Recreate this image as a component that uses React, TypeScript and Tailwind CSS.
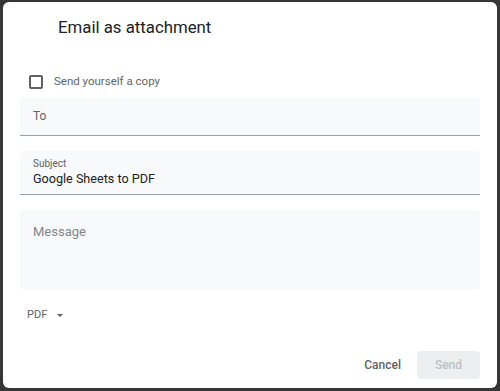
import React from "react";

export default function App() {
  const font = { fontFamily: "Roboto, 'Noto Sans', Arial, sans-serif" } as React.CSSProperties;
  return (
    <div className="w-[500px] h-[391px] bg-[#363636] pt-[2px] pl-[3px] pr-[3px] pb-[3px]" style={font}>
      <div className="w-full h-full bg-white rounded-[6px] px-[17px] flex flex-col">
        <div className="pt-[14px] pl-[38px] h-[38px] text-[16.8px] leading-[22px] text-[#202124]">
          Email as attachment
        </div>
        <div className="mt-[32px] h-[20px] flex items-center pl-[9px]">
          <div className="w-[14px] h-[14px] border-2 border-[#5f6368] rounded-[2px]" />
          <span className="ml-[11px] text-[11.5px] text-[#5f6368]">Send yourself a copy</span>
        </div>
        <div className="mt-[5px] h-[39px] bg-[#f8f9fa] border-b border-[#9aa0a6] rounded-t-[4px] flex items-center pl-[13px]">
          <span className="text-[12px] text-[#5f6368]">To</span>
        </div>
        <div className="mt-[15px] h-[44px] bg-[#f8f9fa] border-b border-[#9aa0a6] rounded-t-[4px] flex flex-col pl-[13px] pt-[7px]">
          <span className="text-[10px] leading-[12px] text-[#5f6368]">Subject</span>
          <span className="text-[12.6px] leading-[18px] text-[#202124]">Google Sheets to PDF</span>
        </div>
        <div className="mt-[15px] h-[80px] bg-[#f8f9fa] rounded-[4px] pl-[13px] pt-[14px]">
          <span className="block text-[13px] leading-[16px] text-[#80868b]">Message</span>
        </div>
        <div className="mt-[16px] h-[18px] flex items-center pl-[7px]">
          <span className="text-[11px] text-[#5f6368]">PDF</span>
          <svg width="10" height="10" viewBox="0 0 10 10" className="ml-[8px]">
            <path d="M2 4 L8 4 L5 7 Z" fill="#5f6368" />
          </svg>
        </div>
        <div className="mt-[27px] flex justify-end items-center">
          <span className="text-[12px] font-medium text-[#5f6368] mr-[16px]">Cancel</span>
          <div className="w-[63px] h-[28px] rounded-[4px] bg-[#eceef0] flex items-center justify-center">
            <span className="text-[12px] font-medium text-[#bdc1c6]">Send</span>
          </div>
        </div>
      </div>
    </div>
  );
}
